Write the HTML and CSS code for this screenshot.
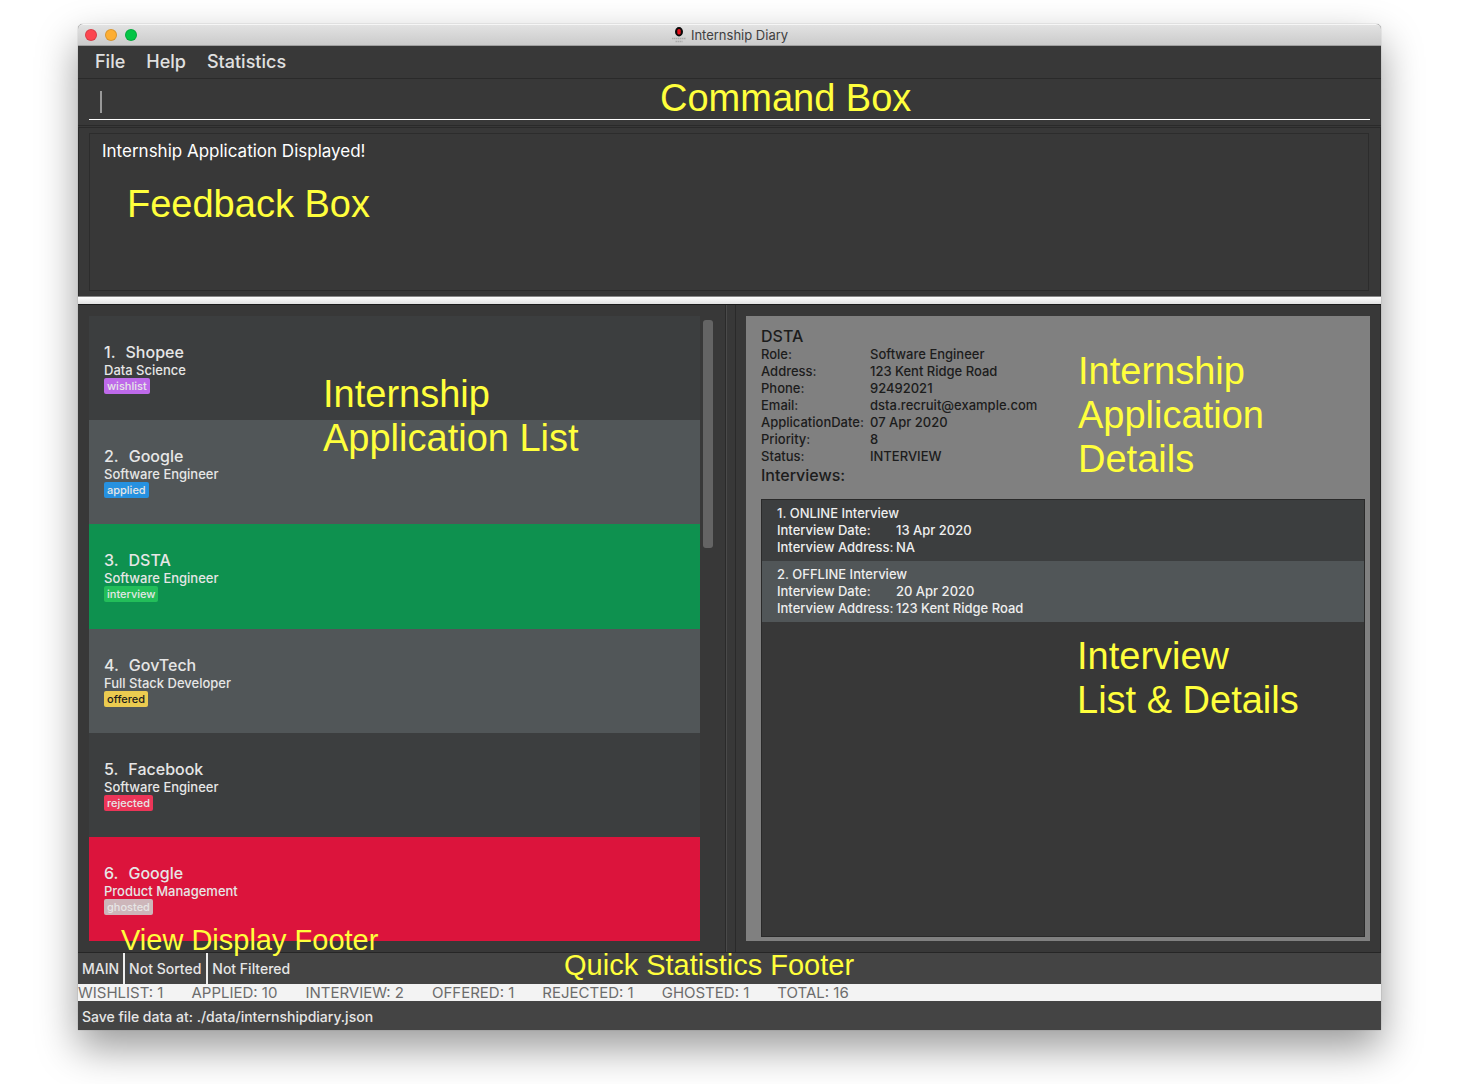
FILE: index.html
```html
<!DOCTYPE html>
<html lang="en">
<head>
<meta charset="utf-8">
<title>Internship Diary</title>
<link rel="stylesheet" href="styles.css">
</head>
<body>
<main class="window">
  <header class="titlebar">
    <div class="lights"><span class="light light-close"></span><span class="light light-min"></span><span class="light light-max"></span></div>
    <h1 class="title">
      <svg class="logo" viewBox="0 0 16 16" aria-hidden="true"><ellipse cx="8" cy="4.800" rx="4" ry="4.700" fill="#0a0a0a"/><rect x="6.300" y="2" width="3.400" height="5.600" rx="1.500" fill="#e8121c"/><path d="M1 11.500H15M4.500 14.500H11.500" stroke="#aaa" stroke-width="1.400" stroke-dasharray="1.500 .5"/></svg>
      Internship Diary
    </h1>
  </header>
  <nav class="menubar">
    <button class="menu" type="button">File</button>
    <button class="menu" type="button">Help</button>
    <button class="menu" type="button">Statistics</button>
  </nav>
  <section class="command">
    <input class="command-input" type="text" aria-label="Command">
    <p class="note note-command">Command Box</p>
  </section>
  <section class="feedback">
    <div class="feedback-text">Internship Application Displayed!</div>
    <p class="note note-feedback">Feedback Box</p>
  </section>
  <div class="divider"></div>
  <div class="split">
    <section class="pane pane-list">
      <ul class="applications">
        <li class="application"><h2 class="company"><span>1.</span><span>Shopee</span></h2><p class="role">Data Science</p><span class="tag tag-wishlist">wishlist</span></li>
        <li class="application"><h2 class="company"><span>2.</span><span>Google</span></h2><p class="role">Software Engineer</p><span class="tag tag-applied">applied</span></li>
        <li class="application is-selected"><h2 class="company"><span>3.</span><span>DSTA</span></h2><p class="role">Software Engineer</p><span class="tag tag-interview">interview</span></li>
        <li class="application"><h2 class="company"><span>4.</span><span>GovTech</span></h2><p class="role">Full Stack Developer</p><span class="tag tag-offered">offered</span></li>
        <li class="application"><h2 class="company"><span>5.</span><span>Facebook</span></h2><p class="role">Software Engineer</p><span class="tag tag-rejected">rejected</span></li>
        <li class="application is-ghosted"><h2 class="company"><span>6.</span><span>Google</span></h2><p class="role">Product Management</p><span class="tag tag-ghosted">ghosted</span></li>
      </ul>
      <div class="scrollbar"><div class="thumb"></div></div>
      <p class="note note-list">Internship<br>Application List</p>
    </section>
    <section class="pane pane-details">
      <div class="details">
        <h2 class="details-name">DSTA</h2>
        <dl class="fields">
          <dt>Role:</dt><dd>Software Engineer</dd>
          <dt>Address:</dt><dd>123 Kent Ridge Road</dd>
          <dt>Phone:</dt><dd>92492021</dd>
          <dt>Email:</dt><dd>dsta.recruit@example.com</dd>
          <dt>ApplicationDate:</dt><dd>07 Apr 2020</dd>
          <dt>Priority:</dt><dd>8</dd>
          <dt>Status:</dt><dd>INTERVIEW</dd>
        </dl>
        <h3 class="details-sub">Interviews:</h3>
        <ul class="interviews">
          <li class="interview"><h4 class="interview-name">1. ONLINE Interview</h4><dl class="fields fields-interview"><dt>Interview Date:</dt><dd>13 Apr 2020</dd><dt>Interview Address:</dt><dd>NA</dd></dl></li>
          <li class="interview"><h4 class="interview-name">2. OFFLINE Interview</h4><dl class="fields fields-interview"><dt>Interview Date:</dt><dd>20 Apr 2020</dd><dt>Interview Address:</dt><dd>123 Kent Ridge Road</dd></dl></li>
        </ul>
      </div>
      <p class="note note-details">Internship<br>Application<br>Details</p>
      <p class="note note-interviews">Interview<br>List &amp; Details</p>
    </section>
  </div>
  <footer class="footer">
    <div class="view"><span class="view-cell">MAIN</span><span class="view-cell">Not Sorted</span><span class="view-cell">Not Filtered</span></div>
    <div class="stats"><span>WISHLIST: 1</span><span>APPLIED: 10</span><span>INTERVIEW: 2</span><span>OFFERED: 1</span><span>REJECTED: 1</span><span>GHOSTED: 1</span><span>TOTAL: 16</span></div>
    <div class="save">Save file data at: ./data/internshipdiary.json</div>
    <p class="note note-small note-view">View Display Footer</p>
    <p class="note note-small note-stats">Quick Statistics Footer</p>
  </footer>
</main>
</body>
</html>
```

FILE: styles.css
```css
* { box-sizing: border-box; margin: 0; padding: 0; }

body {
  display: flex;
  min-height: 100vh;
  padding: 24px 98px 54px 78px;
  background: #fff;
  font-family: Inter, "Liberation Sans", sans-serif;
  font-weight: 500;
  color: #e6e6e6;
}

h1, h2, h3, h4 { font-weight: inherit; }
ul { list-style: none; }

.window {
  flex: 1;
  display: flex;
  flex-direction: column;
  min-width: 0;
  border-radius: 5px 5px 0 0;
  background: #383838;
  box-shadow: 0 0 1px #0008, 0 18px 40px #0006;
}

.titlebar {
  display: grid;
  grid-template-columns: 1fr auto 1fr;
  align-items: center;
  height: 22px;
  padding: 0 7px;
  border-top: 1px solid #f6f6f6;
  border-bottom: 1px solid #a0a0a0;
  border-radius: 5px 5px 0 0;
  background: linear-gradient(#e2e2e2, #cbcbcb);
}
.lights { display: flex; gap: 8px; }
.light { width: 12px; height: 12px; border: 1px solid #0002; border-radius: 50%; }
.light-close { background: #fc4650; }
.light-min { background: #fdae33; }
.light-max { background: #04c546; }
.title { display: flex; align-items: center; gap: 4px; font-size: 13px; line-height: 20px; font-weight: 400; color: #404040; }
.logo { width: 16px; height: 16px; }

.menubar { display: flex; gap: 21px; height: 33px; padding: 0 17px; border-bottom: 1px solid #2a2a2a; }
.menu { border: 0; background: none; color: #e0e0e0; font: 500 18px/32px Inter, sans-serif; }

.command { position: relative; height: 47px; padding: 8px 11px 5px 11px; border-bottom: 1px solid #2a2a2a; }
.command-input {
  display: block;
  width: 100%;
  height: 33px;
  padding: 4px 12px;
  border: 0;
  border-bottom: 1px solid #fff;
  outline: 0;
  background: linear-gradient(#999, #999) 11px 4px / 2px 22px no-repeat;
  color: #fff;
  font: 18px Inter, sans-serif;
}

.feedback { position: relative; display: flex; height: 169px; margin-top: 1px; padding: 5px 11px 5px 10px; border: 1px solid #2a2a2a; border-bottom: 0; }
.feedback-text { flex: 1; padding: 6px 12px; border: 1px solid #2c2c2c; color: #fff; font-size: 17px; line-height: 22px; font-weight: 400; }

.divider { height: 9px; border-top: 1px solid #888; border-bottom: 1px solid #1c1c1c; background: linear-gradient(#fff, #e2e2e2); }

.split { flex: 1; display: grid; grid-template-columns: 648px 1fr; gap: 9px; border-bottom: 1px solid #262626; }
.pane { position: relative; display: flex; min-width: 0; padding: 11px 12px 11px 11px; }
.pane-list { gap: 3px; border-right: 1px solid #2a2a2a; box-shadow: 1px 0 #4a4a4a; }
.pane-details { border-left: 1px solid #2a2a2a; padding-left: 10px; border-right: 1px solid #2a2a2a; padding-right: 10px; }

.applications { flex: 1; display: flex; flex-direction: column; }
.application { flex: 1 0 104px; padding: 26px 15px 0; background: #3c3e3f; }
.application:nth-child(even) { background: #515658; }
.application.is-selected { background: #0e914f; }
.application.is-ghosted { background: #dc143c; }
.company { display: flex; gap: 10px; font-size: 16px; line-height: 20px; }
.role { font-size: 13px; line-height: 16px; }
.tag { display: block; width: fit-content; padding: 0 3px; border-radius: 2px; font-size: 11px; line-height: 16px; }
.tag-wishlist { background: #be6aea; }
.tag-applied { background: #2691e0; }
.tag-interview { background: #23be5a; }
.tag-offered { background: #ebcb50; color: #1c1c1c; }
.tag-rejected { background: #ec3558; }
.tag-ghosted { background: #cdb6ba; }
.scrollbar { width: 10px; padding-top: 4px; }
.thumb { height: 228px; border-radius: 3px; background: #646464; }

.details { flex: 1; display: flex; flex-direction: column; padding: 11px 5px 4px 15px; background: #808080; color: #1c1c1c; }
.details-name { font-size: 16px; line-height: 19px; }
.fields { display: grid; grid-template-columns: 109px 1fr; font-size: 13px; line-height: 17px; }
.details-sub { margin-bottom: 14px; font-size: 16px; line-height: 20px; }
.interviews { flex: 1; border: 1px solid #2a2a2a; background: #383838; color: #eee; }
.interview { padding: 5px 15px 5px; background: #3c3e3f; }
.interview:nth-child(even) { background: #515658; }
.interview-name { font-size: 13px; line-height: 17px; }
.fields-interview { grid-template-columns: 119px 1fr; }

.footer { position: relative; background: #444; }
.view { display: flex; height: 31px; font-size: 14px; line-height: 32px; }
.view-cell { padding: 0 4px; }
.view-cell + .view-cell { padding-right: 5px; border-left: 2px solid #eee; }
.stats { display: flex; gap: 28px; height: 17px; background: #f3f3f3; color: #6c6c6c; font-size: 15px; line-height: 17px; font-weight: 400; }
.save { height: 29px; padding: 0 4px; font-size: 14px; line-height: 31px; }

/* Callouts that name the regions of the window */
.note { position: absolute; color: #ffff3c; font: 400 38px/44px "Liberation Sans", Arial, sans-serif; white-space: nowrap; }
.note-small { font-size: 29px; line-height: 32px; }
.note-command { left: 582px; top: -3px; }
.note-feedback { left: 48px; top: 54px; }
.note-list { left: 245px; top: 67px; }
.note-details { left: 342px; top: 44px; }
.note-interviews { left: 341px; top: 329px; }
.note-view { left: 43px; top: -29px; }
.note-stats { left: 486px; top: -4px; }
```
